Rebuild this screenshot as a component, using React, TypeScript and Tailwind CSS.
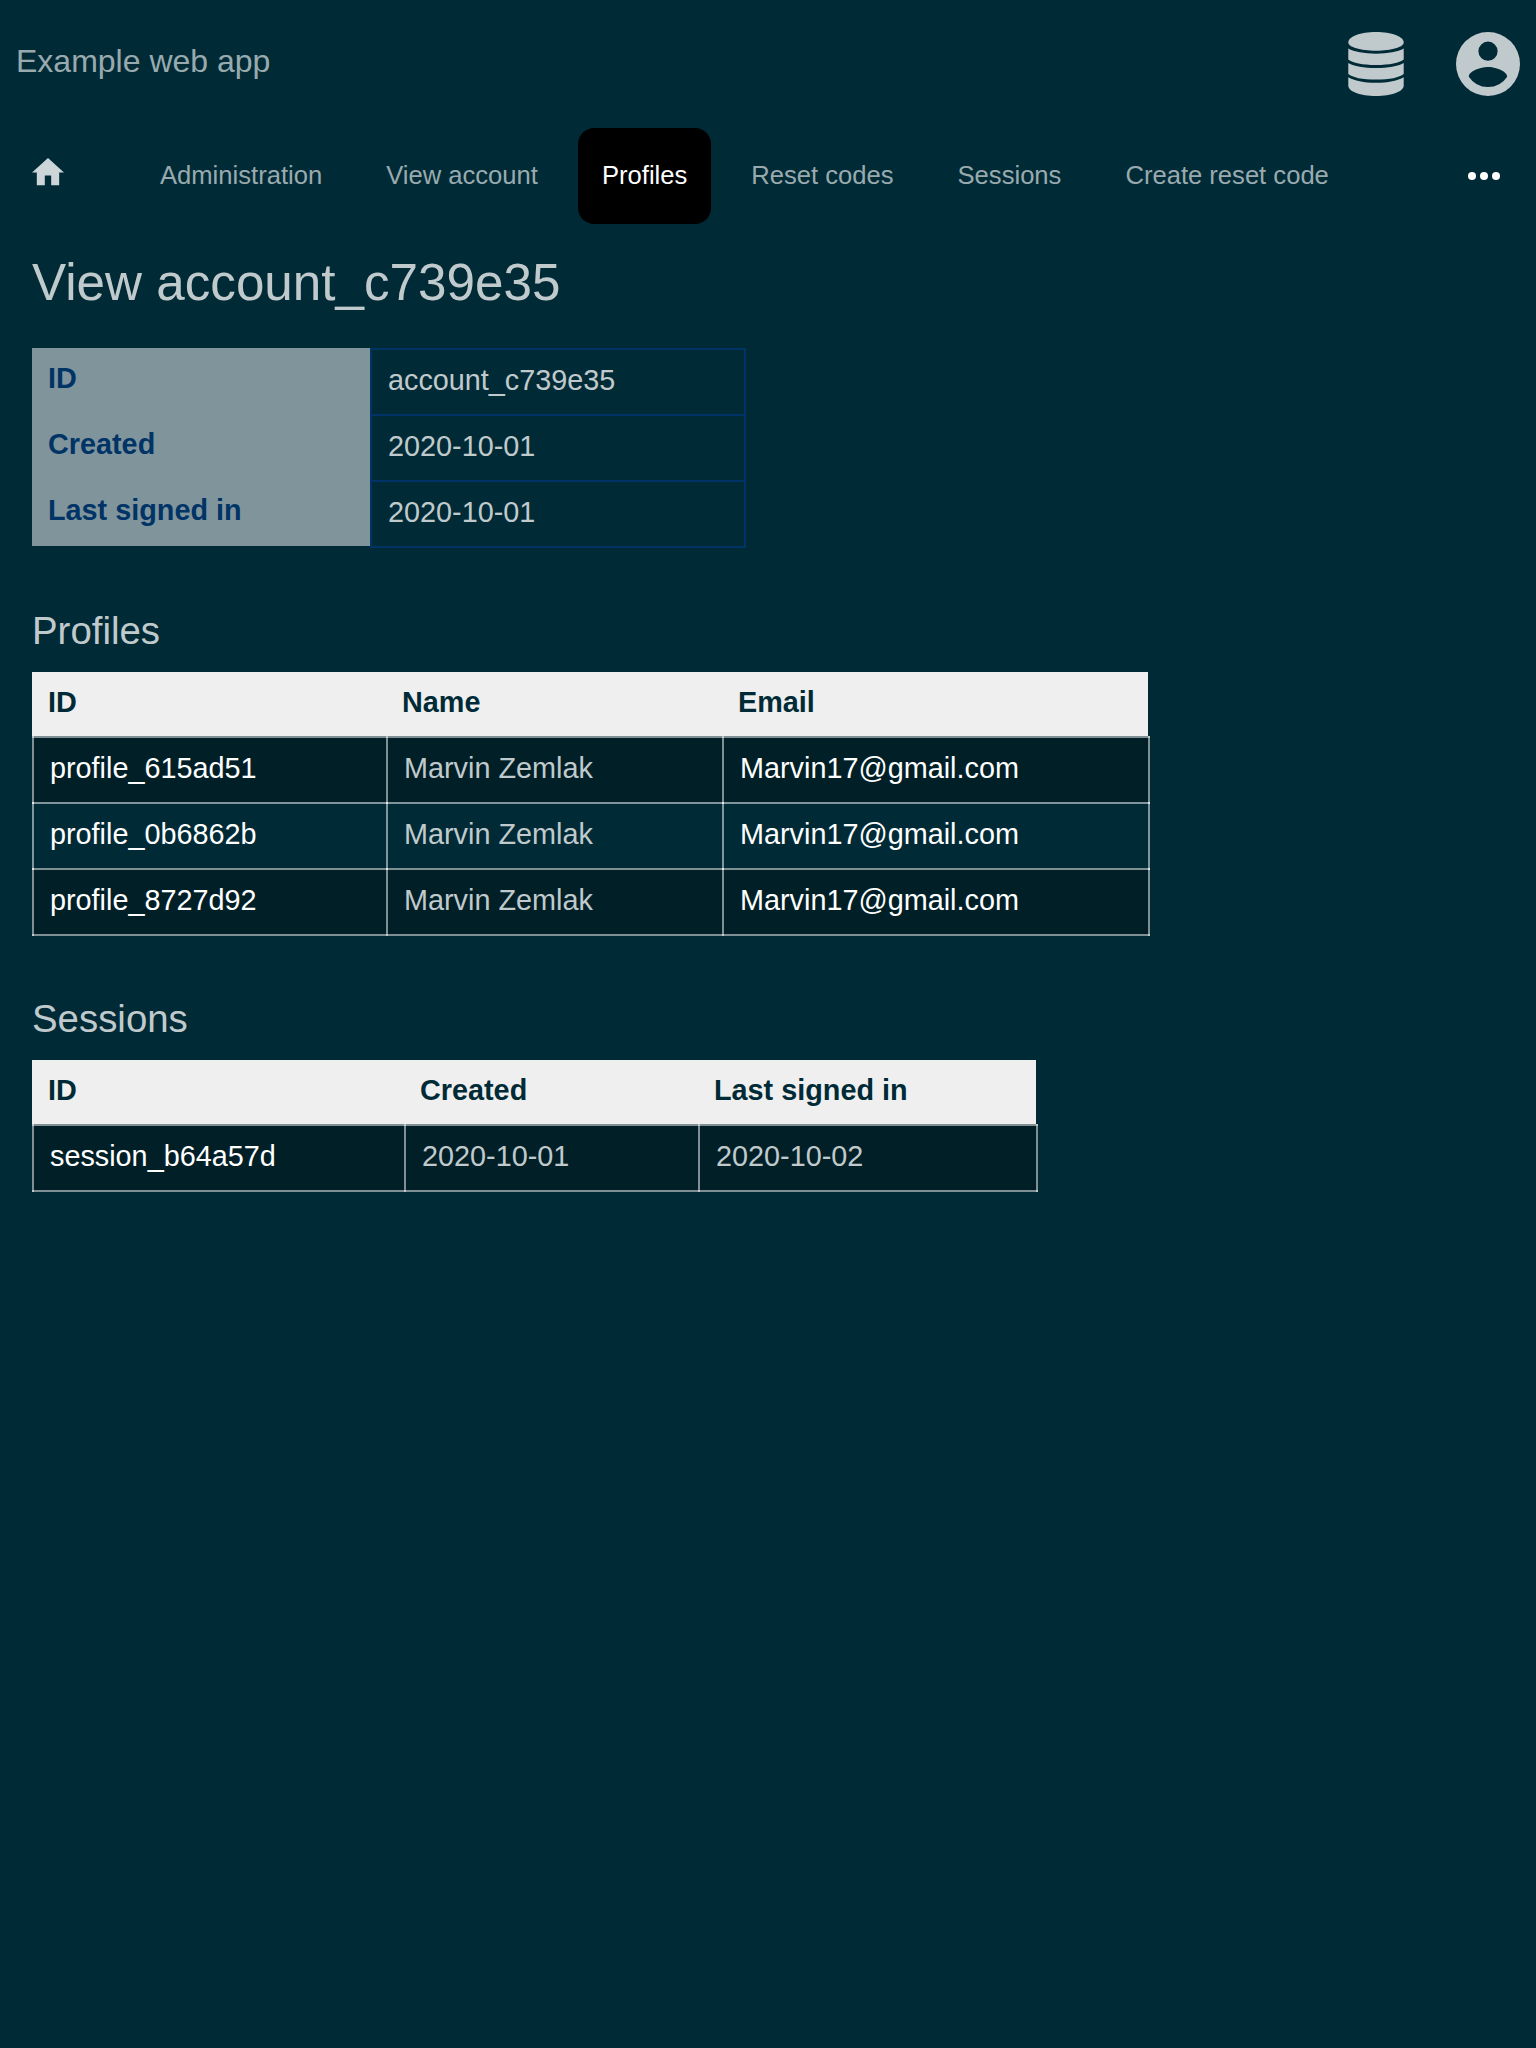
import type { ReactNode } from 'react'

const navItems = ['Administration', 'View account', 'Profiles', 'Reset codes', 'Sessions', 'Create reset code']

const details = [
  ['ID', 'account_c739e35'],
  ['Created', '2020-10-01'],
  ['Last signed in', '2020-10-01'],
]

type Column = { label: string; width: string; link?: boolean }

const profileColumns: Column[] = [
  { label: 'ID', width: 'w-[354px]', link: true },
  { label: 'Name', width: 'w-[336px]' },
  { label: 'Email', width: 'w-[426px]', link: true },
]

const profiles = [
  ['profile_615ad51', 'Marvin Zemlak', 'Marvin17@gmail.com'],
  ['profile_0b6862b', 'Marvin Zemlak', 'Marvin17@gmail.com'],
  ['profile_8727d92', 'Marvin Zemlak', 'Marvin17@gmail.com'],
]

const sessionColumns: Column[] = [
  { label: 'ID', width: 'w-[372px]', link: true },
  { label: 'Created', width: 'w-[294px]' },
  { label: 'Last signed in', width: 'w-[338px]' },
]

const sessions = [['session_b64a57d', '2020-10-01', '2020-10-02']]

function DatabaseIcon() {
  return (
    <svg viewBox="0 0 56 64" className="h-16 w-14 fill-[#c0cacd]" aria-hidden="true">
      <path d="M.3 10.500C.3 4.500 12.500 0 28 0s27.700 4.500 27.700 10.500C55.700 15 43.500 18.700 28 18.700S.3 15 .3 10.500z" />
      <path d="M.3 16.600C6 19.900 16 21.700 28 21.700s22-1.800 27.700-5.100v10.900C51.500 30.800 41.500 33 28 33S4.500 30.800.3 27.500z" />
      <path d="M.3 31C6 34.300 16 36.100 28 36.100S50 34.300 55.700 31v10.900C51.500 45.400 41.500 47.600 28 47.600S4.500 45.400.3 41.900z" />
      <path d="M.3 45.200C6 48.700 16 50.700 28 50.700s22-2 27.700-5.500v8.600C55.700 59.500 43.500 64 28 64S.3 59.500.3 53.800z" />
    </svg>
  )
}

function AccountIcon() {
  return (
    <svg viewBox="0 0 64 64" className="size-16 fill-[#c0cacd]" fillRule="evenodd" aria-hidden="true">
      <path d="M32 0a32 32 0 1 0 0 64 32 32 0 0 0 0-64zm0 9.600a9.600 9.600 0 1 1 0 19.200 9.600 9.600 0 0 1 0-19.200zm0 45.440a23.040 23.040 0 0 1-19.200-10.300C12.900 38.370 25.600 34.880 32 34.880s19.100 3.490 19.200 9.860A23.040 23.040 0 0 1 32 55.040z" />
    </svg>
  )
}

function Heading({ children }: { children: ReactNode }) {
  return <h2 className="text-[38.4px] leading-[44px]">{children}</h2>
}

function DataTable({ columns, rows }: { columns: Column[]; rows: string[][] }) {
  return (
    <div role="table" className="w-fit text-[28.8px] leading-8">
      <div role="row" className="mr-0.5 flex h-16 bg-[#efefef] font-bold text-[#002b36]">
        {columns.map((c) => (
          <div key={c.label} role="columnheader" className={`px-4 pt-[14px] ${c.width}`}>
            {c.label}
          </div>
        ))}
      </div>
      {rows.map((row) => (
        <div
          key={row[0]}
          role="row"
          className="flex h-[66px] border-t-2 border-white/50 odd:bg-[#002b36] even:bg-[#001f27] last:h-[68px] last:border-b-2"
        >
          {row.map((value, i) => (
            <div
              key={i}
              role="cell"
              className={`-my-0.5 box-content border-l-2 border-white/50 last:border-r-2 ${columns[i].link ? 'text-white' : ''}`}
            >
              <div className={`-mr-0.5 px-4 pt-4 ${columns[i].width}`}>{value}</div>
            </div>
          ))}
        </div>
      ))}
    </div>
  )
}

export default function App() {
  return (
    <div className="min-h-[2048px] bg-[#002b36] font-['Liberation_Sans',Arial,sans-serif] text-[#c0cacd]">
      <header className="flex h-32 items-center justify-between px-4">
        <div className="pb-1.5 text-[32px] leading-[37px] text-[#99aaaf]">Example web app</div>
        <div className="flex gap-[52px]">
          <DatabaseIcon />
          <AccountIcon />
        </div>
      </header>

      <nav className="flex h-24 items-center pr-9 text-[25.6px]">
        <a href="#" className="mr-[72px] ml-8 w-8 pb-2">
          <svg viewBox="2 3 20 17" className="h-[27.200px] w-8 fill-[#ccd5d7]" aria-hidden="true">
            <path d="M10 20v-6h4v6h5v-8h3L12 3 2 12h3v8z" />
          </svg>
        </a>
        <div className="flex gap-4">
          {navItems.map((item) => (
            <a
              key={item}
              href="#"
              className={`flex h-24 items-center rounded-2xl px-6 pb-0.5 ${item === 'Profiles' ? 'bg-black text-white' : 'text-[#99aaaf]'}`}
            >
              {item}
            </a>
          ))}
        </div>
        <svg viewBox="0 0 32 8" className="ml-auto h-2 w-8 fill-white" aria-hidden="true">
          <circle cx="4" cy="4" r="4" />
          <circle cx="16" cy="4" r="4" />
          <circle cx="28" cy="4" r="4" />
        </svg>
      </nav>

      <main className="px-8 pt-[29px]">
        <h1 className="text-[51.2px] leading-[59px]">View account_c739e35</h1>

        <div role="table" className="mt-9 flex h-[200px] w-fit text-[28.8px] leading-8">
          <div className="h-[198px] w-[338px] bg-[#80959b] font-bold text-[#003366]">
            {details.map(([label]) => (
              <div key={label} className="h-[66px] px-4 pt-[14px]">
                {label}
              </div>
            ))}
          </div>
          <div className="w-[376px] border-2 border-[#003366]">
            {details.map(([label, value]) => (
              <div key={label} className="h-[66px] border-b-2 border-[#003366] px-4 pt-[14px] last:h-16 last:border-b-0">
                {value}
              </div>
            ))}
          </div>
        </div>

        <section className="mt-[61px]">
          <Heading>Profiles</Heading>
          <div className="mt-[19px]">
            <DataTable columns={profileColumns} rows={profiles} />
          </div>
        </section>

        <section className="mt-[61px]">
          <Heading>Sessions</Heading>
          <div className="mt-[19px]">
            <DataTable columns={sessionColumns} rows={sessions} />
          </div>
        </section>
      </main>
    </div>
  )
}
